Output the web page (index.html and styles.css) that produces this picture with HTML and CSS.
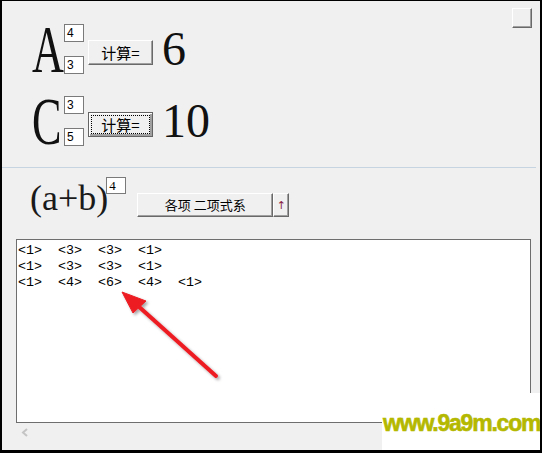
FILE: index.html
```html
<!DOCTYPE html>
<html lang="zh-CN">
<head>
  <meta charset="UTF-8" />
  <title>组合数计算</title>
  <link rel="stylesheet" href="styles.css">
</head>
<body>
  <div class="window">
    <div class="top">
      <div class="formulas">
        <div class="formula">
          <span class="big-letter">A</span>
          <div class="inputs">
            <span class="num-box">4</span>
            <span class="num-box">3</span>
          </div>
          <button class="calc-btn">计算=</button>
          <span class="result">6</span>
        </div>
        <div class="formula">
          <span class="big-letter">C</span>
          <div class="inputs">
            <span class="num-box">3</span>
            <span class="num-box">5</span>
          </div>
          <button class="calc-btn is-default"><span class="focus">计算=</span></button>
          <span class="result">10</span>
        </div>
      </div>
      <button class="corner-btn"></button>
    </div>

    <div class="separator"></div>

    <div class="binomial">
      <span class="expr">(a+b)</span>
      <span class="num-box sup">4</span>
      <button class="series-btn">各项 二项式系</button>
      <button class="up-btn">↑</button>
    </div>

    <div class="output">&lt;1&gt;  &lt;3&gt;  &lt;3&gt;  &lt;1&gt;
&lt;1&gt;  &lt;3&gt;  &lt;3&gt;  &lt;1&gt;
&lt;1&gt;  &lt;4&gt;  &lt;6&gt;  &lt;4&gt;  &lt;1&gt;</div>

    <div class="hscroll">
      <svg width="8" height="9" viewBox="0 0 8 9"><path d="M6 1 L2 4.5 L6 8" fill="none" stroke="#c4c4c4" stroke-width="2"/></svg>
    </div>

    <!-- pointer to the middle coefficient -->
    <svg class="pointer" width="542" height="453" viewBox="0 0 542 453">
      <defs>
        <filter id="shade" x="-20%" y="-20%" width="140%" height="140%">
          <feDropShadow dx="2" dy="2" stdDeviation="1.5" flood-color="#000" flood-opacity="0.35"/>
        </filter>
      </defs>
      <g filter="url(#shade)" fill="#ec1c24" stroke="#ec1c24">
        <line x1="216" y1="376" x2="137" y2="305" stroke-width="4" stroke-linecap="round"/>
        <polygon points="122,292 146,301 133,313" stroke-width="1" stroke-linejoin="round"/>
      </g>
    </svg>

    <div class="site-mark">www.9a9m.com</div>
  </div>
</body>
</html>
```

FILE: styles.css
```css
body {
  margin: 0;
  font-family: "Liberation Sans", Arial, sans-serif;
}

.window {
  position: relative;
  width: 538px;
  height: 449px;
  border-style: solid;
  border-color: #000;
  border-width: 1px 2px 3px 2px;
  background: #f0f0f0;
  overflow: hidden;
}

.top {
  display: flex;
  align-items: flex-start;
  height: 166px;
  box-sizing: border-box;
  padding: 7px 8px 0 30px;
}

.formulas {
  display: flex;
  flex-direction: column;
  gap: 22px;
  margin-top: 16px;
}

.formula {
  display: flex;
  align-items: center;
  height: 50px;
}

.big-letter {
  display: inline-block;
  width: 32px;
  font-family: "Liberation Serif", "Times New Roman", serif;
  font-size: 67px;
  line-height: 48px;
  transform: scaleX(0.66);
  transform-origin: left center;
  color: #111;
}

.inputs {
  display: flex;
  flex-direction: column;
  justify-content: space-between;
  height: 50px;
}

.num-box {
  display: block;
  width: 20px;
  height: 18px;
  box-sizing: border-box;
  border: 1px solid #7a7a7a;
  background: #fff;
  font-size: 12px;
  line-height: 16px;
  padding-left: 2px;
  color: #000;
}

button {
  font-family: "Noto Sans CJK SC", sans-serif;
  background: #f0f0f0;
  border: 1px solid;
  border-color: #fff #696969 #696969 #fff;
  box-shadow: inset -1px -1px 0 #a0a0a0;
  padding: 0;
  color: #000;
}

.calc-btn {
  align-self: flex-start;
  width: 65px;
  height: 25px;
  margin: 16px 0 0 4px;
  font-size: 15px;
  line-height: 20px;
}

.calc-btn.is-default {
  border: 1px solid #646464;
  box-shadow: inset 1px 1px 0 #fff, inset -2px -2px 0 #a0a0a0;
}

.calc-btn .focus {
  display: block;
  margin: 2px;
  border: 1px dotted #000;
  line-height: 17px;
}

.result {
  margin-left: 9px;
  font-family: "Liberation Serif", "Times New Roman", serif;
  font-size: 48px;
  line-height: 48px;
  color: #111;
}

.corner-btn {
  width: 20px;
  height: 20px;
  margin-left: auto;
}

.separator {
  height: 1px;
  margin-right: 4px;
  background: #c6d3e0;
}

.binomial {
  display: flex;
  align-items: flex-start;
  height: 40px;
  margin-top: 9px;
  padding-left: 28px;
}

.expr {
  margin-top: 3px;
  font-family: "Liberation Serif", "Times New Roman", serif;
  font-size: 36px;
  line-height: 36px;
  color: #1a1a1a;
}

.num-box.sup {
  height: 17px;
  margin-left: -2px;
  font-family: "Liberation Serif", serif;
  font-size: 13px;
  line-height: 15px;
}

.series-btn {
  width: 136px;
  height: 24px;
  margin: 16px 0 0 11px;
  font-size: 13px;
  line-height: 20px;
}

.up-btn {
  width: 16px;
  height: 24px;
  margin-top: 16px;
  font-family: "DejaVu Sans", sans-serif;
  font-size: 11px;
  color: #8a1f45;
}

.output {
  width: 515px;
  height: 184px;
  box-sizing: border-box;
  margin: 22px 0 0 14px;
  border: 1px solid #6e6e6e;
  background: #fff;
  padding: 3px 0 0 1px;
  font-family: "Liberation Mono", "Courier New", monospace;
  font-size: 13.33px;
  line-height: 16px;
  white-space: pre;
  color: #000;
}

.hscroll {
  padding: 5px 0 0 19px;
}

.hscroll svg {
  display: block;
}

.pointer {
  position: absolute;
  left: -2px;
  top: -1px;
  pointer-events: none;
}

.site-mark {
  position: absolute;
  right: -2px;
  bottom: -3px;
  width: 160px;
  height: 60px;
  box-sizing: border-box;
  background: #fff;
  padding: 17px 0 0 1px;
  font-family: "Liberation Sans", Arial, sans-serif;
  font-weight: bold;
  font-size: 23px;
  line-height: 26px;
  letter-spacing: -1.2px;
  color: #b4b800;
  -webkit-text-stroke: 0.6px #b4b800;
}
```
